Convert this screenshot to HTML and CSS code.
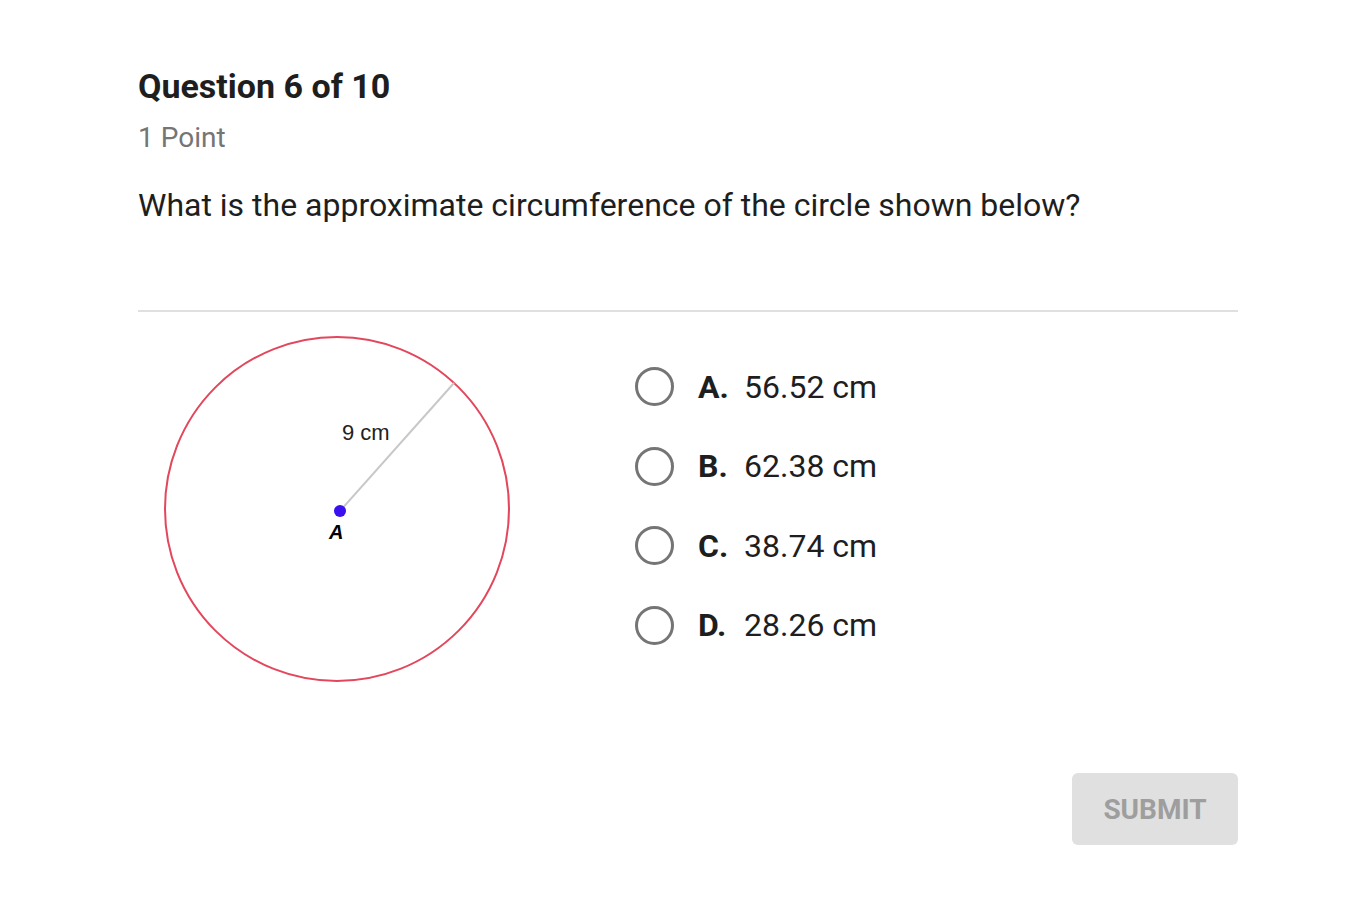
FILE: index.html
```html
<!DOCTYPE html>
<html>
<head>
<meta charset="utf-8">
<link rel="stylesheet" href="styles.css">
</head>
<body>
<div class="page">
  <h1 class="title">Question 6 of 10</h1>
  <div class="points">1 Point</div>
  <p class="prompt">What is the approximate circumference of the circle shown below?</p>
  <hr class="sep">
  <div class="content">
    <div class="figure">
      <svg width="400" height="380" viewBox="0 0 400 380">
        <circle cx="199" cy="197" r="172" fill="none" stroke="#e2475c" stroke-width="2"/>
        <line x1="202" y1="199" x2="316" y2="71" stroke="#c8c8c8" stroke-width="2"/>
        <circle cx="202" cy="199" r="6" fill="#3a10f0"/>
        <text x="204" y="128" class="lbl">9 cm</text>
        <text x="191" y="227" class="pt">A</text>
      </svg>
    </div>
    <div class="options">
      <div class="opt"><span class="radio"></span><span class="letter">A.</span><span class="val">56.52 cm</span></div>
      <div class="opt"><span class="radio"></span><span class="letter">B.</span><span class="val">62.38 cm</span></div>
      <div class="opt"><span class="radio"></span><span class="letter">C.</span><span class="val">38.74 cm</span></div>
      <div class="opt"><span class="radio"></span><span class="letter">D.</span><span class="val">28.26 cm</span></div>
    </div>
  </div>
  <div class="actions">
    <button class="submit">SUBMIT</button>
  </div>
</div>
</body>
</html>
```
FILE: styles.css
```css
html, body {
  margin: 0;
  padding: 0;
  background: #ffffff;
}
body {
  font-family: Roboto, "Liberation Sans", Arial, sans-serif;
  color: #212121;
}
.page {
  width: 1100px;
  margin-left: 138px;
  padding-top: 64px;
}
.title {
  margin: 0;
  font-size: 34px;
  font-weight: 700;
  line-height: 44px;
  color: #1e1e1e;
}
.points {
  margin-top: 12px;
  font-size: 28px;
  line-height: 36px;
  color: #757575;
}
.prompt {
  margin: 29px 0 0 0;
  font-size: 32px;
  line-height: 40px;
  color: #1e1e1e;
}
.sep {
  margin: 85px 0 0 0;
  border: 0;
  border-top: 2px solid #e0e0e0;
  height: 0;
}
.content {
  display: flex;
  align-items: flex-start;
}
.figure {
  width: 497px;
}
.figure svg {
  display: block;
}
.lbl {
  font-family: "Liberation Sans", Arial, sans-serif;
  font-size: 22px;
  fill: #222;
}
.pt {
  font-family: "Liberation Sans", Arial, sans-serif;
  font-size: 20px;
  font-weight: 700;
  font-style: italic;
  fill: #000;
}
.options {
  display: flex;
  flex-direction: column;
  padding-top: 35px;
}
.opt {
  display: flex;
  align-items: center;
  height: 79.5px;
}
.radio {
  width: 33px;
  height: 33px;
  border: 3px solid #757575;
  border-radius: 50%;
  margin-right: 24px;
  flex: none;
}
.letter {
  font-size: 32px;
  font-weight: 700;
  width: 46px;
  color: #1e1e1e;
}
.val {
  font-size: 32px;
  color: #1e1e1e;
}
.actions {
  display: flex;
  justify-content: flex-end;
  margin-top: 81px;
}
.submit {
  width: 166px;
  height: 72px;
  border: 0;
  border-radius: 6px;
  background: #e0e0e0;
  color: #9e9e9e;
  font-family: Roboto, "Liberation Sans", Arial, sans-serif;
  font-size: 28px;
  font-weight: 700;
  padding: 0;
}
```
